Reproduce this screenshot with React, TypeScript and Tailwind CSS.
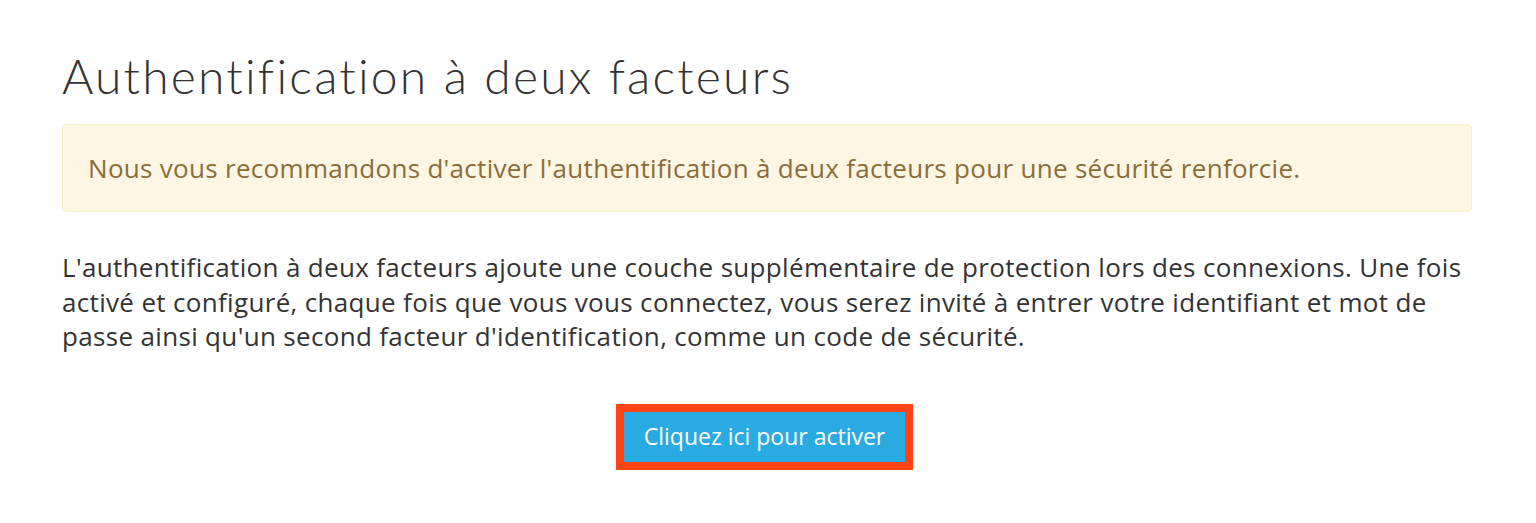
export default function App() {
  return (
    <div className="w-[1536px] h-[523px] bg-white overflow-hidden" style={{ fontFamily: '"Open Sans", sans-serif' }}>
      <div className="ml-[62px] w-[1410px] pt-[46px]">
        <h1 className="text-[48px] leading-[60px] text-[#333333] font-light tracking-[2.2px]" style={{ fontFamily: 'Lato, sans-serif' }}>
          Authentification à deux facteurs
        </h1>
        <div className="mt-[18px] h-[88px] rounded-[5px] border border-[#faebcc] bg-[#fcf6e2] pl-[25px] flex items-center text-[26px] tracking-[0.3px] text-[#8a6d3b]">
          Nous vous recommandons d'activer l'authentification à deux facteurs pour une sécurité renforcie.
        </div>
        <p className="mt-[38px] text-[26px] leading-[34.5px] tracking-[0.33px] text-[#333333]">
          L'authentification à deux facteurs ajoute une couche supplémentaire de protection lors des connexions. Une fois activé et configuré, chaque fois que vous vous connectez, vous serez invité à entrer votre identifiant et mot de passe ainsi qu'un second facteur d'identification, comme un code de sécurité.
        </p>
        <div className="mt-[50px] flex justify-center">
          <div className="mr-[5px] border-[8px] border-[#ff4415] bg-[#29abe2] h-[66px] w-[297px]">
            <button className="h-[50px] w-[281px] text-[23px] text-white bg-[#29abe2]">Cliquez ici pour activer</button>
          </div>
        </div>
      </div>
    </div>
  );
}
